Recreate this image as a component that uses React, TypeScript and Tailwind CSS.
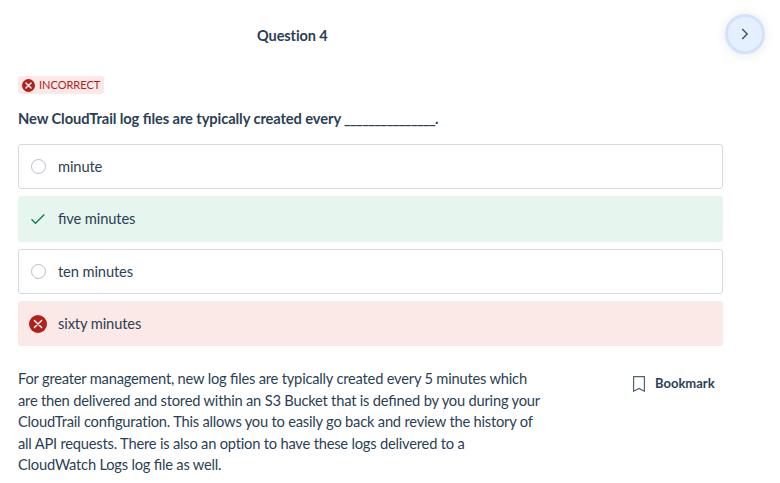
import React from "react";

function Cross({ size, x }: { size: number; x?: number }) {
  return (
    <svg width={size} height={size} viewBox="0 0 18 18" className="shrink-0">
      <circle cx="9" cy="9" r="9" fill="#b3201c" />
      <path d="M5.4 5.4l7.2 7.2M12.6 5.4l-7.2 7.2" stroke="#fff" strokeWidth={x ?? 1.4} strokeLinecap="round" />
    </svg>
  );
}

function Radio() {
  return <span className="size-[15px] rounded-full border border-[#b9bfca] bg-white" />;
}

function Fi() {
  return <span className="[font-feature-settings:'liga'_1]">fi</span>;
}

function Option({ label, kind }: { label: React.ReactNode; kind: "plain" | "right" | "wrong" }) {
  const tone =
    kind === "plain"
      ? "border-[#d7dae0] bg-white h-[45px]"
      : kind === "right"
        ? "border-[#e6f5ee] bg-[#e6f5ee] h-[46px] pb-px"
        : "border-[#fbe9e7] bg-[#fbe9e7] h-[45px]";
  return (
    <li className={`flex items-center rounded-[3px] border px-[9px] ${tone}`}>
      <span className="mr-[10px] flex w-5 justify-center">
        {kind === "plain" && <Radio />}
        {kind === "right" && (
          <svg width="16" height="12" viewBox="0 0 16 12" fill="none">
            <path d="M1.5 6.3l4 4L14.3 1.5" stroke="#0c8556" strokeWidth="1.4" />
          </svg>
        )}
        {kind === "wrong" && <Cross size={18} />}
      </span>
      <span className="tracking-[-0.12px]">{label}</span>
    </li>
  );
}

export default function App() {
  return (
    <main className="h-[483px] w-[780px] overflow-hidden bg-white pl-[18px] font-[Lato,sans-serif] text-[14.7px] text-[#2b3f54]">
      <header className="flex h-[69px] items-center">
        <h1 className="mt-[2px] ml-[239px] flex-1 text-[14.5px] tracking-[-0.08px] font-bold">Question 4</h1>
        <button className="mr-[15px] mb-px flex size-10 items-center justify-center rounded-full border-[3px] border-[#d3e2fc] bg-[#e6effe] shadow-[0_1px_12px_rgba(0,0,0,0.09)]">
          <svg width="8" height="12" viewBox="0 0 8 12" fill="none">
            <path d="M1.2 1l5 5-5 5" stroke="#3d5063" strokeWidth="1.4" />
          </svg>
        </button>
      </header>
      <div className="mt-[7px] flex h-[18px] w-[86px] items-center gap-1 rounded-[3px] bg-[#fbe9e7] pl-1 text-[11px] text-[#b3201c]">
        <Cross size={13} x={1.9} />
        <span>INCORRECT</span>
      </div>
      <h2 className="mt-[13px] h-[22px] text-[14.7px] leading-[22px] font-bold whitespace-nowrap">
        <span className="inline-block w-[326px] tracking-[-0.1px]">New CloudTrail log <Fi />les are typically created every</span>
        <span className="tracking-[-0.79px]">_______________</span>.
      </h2>
      <ul className="mt-[15px] flex w-[705px] flex-col gap-[7px]">
        <Option label="minute" kind="plain" />
        <Option label={<><Fi />ve minutes</>} kind="right" />
        <Option label="ten minutes" kind="plain" />
        <Option label="sixty minutes" kind="wrong" />
      </ul>
      <section className="mt-[22px] flex items-start">
        <p className="w-[615px] leading-[21.5px] tracking-[-0.21px] whitespace-nowrap">
          For greater management, new log <Fi />les are typically created every 5 minutes which<br />
          are then delivered and stored within an S3 Bucket that is de<Fi />ned by you during your<br />
          CloudTrail con<Fi />guration. This allows you to easily go back and review the history of<br />
          all API requests. There is also an option to have these logs delivered to a<br />
          CloudWatch Logs log <Fi />le as well.
        </p>
        <button className="mt-[6px] flex items-center gap-[10px] text-[13px] font-bold">
          <svg width="12" height="16" viewBox="0 0 12 16" fill="none">
            <path d="M.6.6h10.8v14.6L6 12.5.6 15.2z" stroke="#536375" strokeWidth="1.2" />
          </svg>
          Bookmark
        </button>
      </section>
    </main>
  );
}
